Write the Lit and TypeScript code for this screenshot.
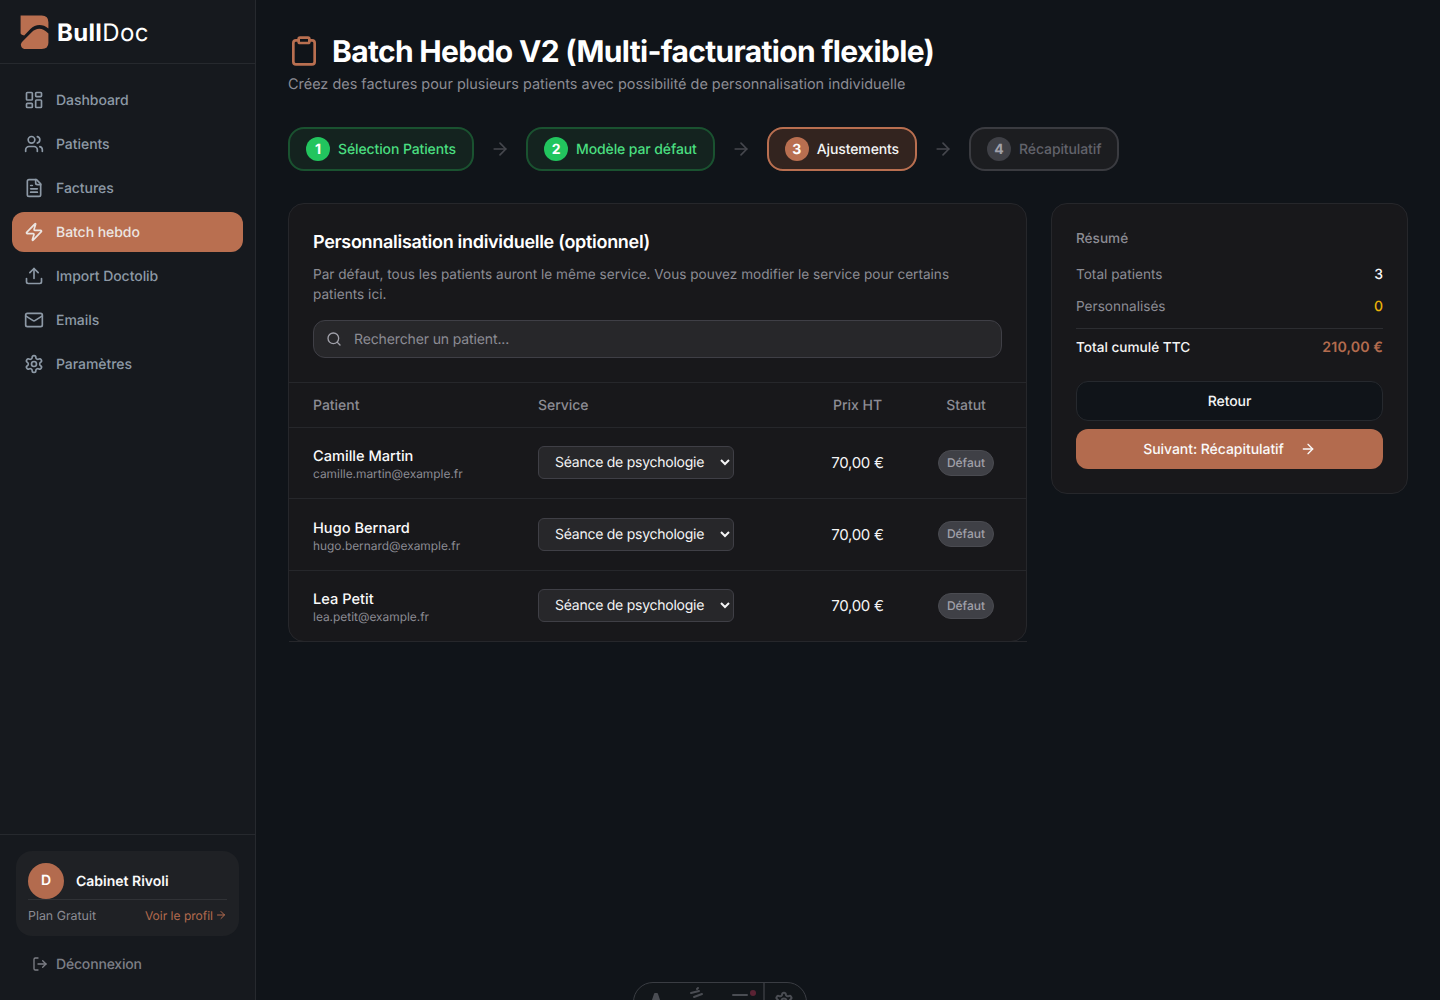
import { LitElement, html, css, svg } from "lit";
import { customElement } from "lit/decorators.js";

const ic = (body: unknown, size = 20, cls = "") => html`<svg class=${cls} width=${size} height=${size} viewBox="0 0 24 24" fill="none" stroke="currentColor" stroke-width="2" stroke-linecap="round" stroke-linejoin="round">${body}</svg>`;

const icons = {
  dash: svg`<rect x="3" y="3" width="7" height="9" rx="1"/><rect x="14" y="3" width="7" height="5" rx="1"/><rect x="14" y="12" width="7" height="9" rx="1"/><rect x="3" y="16" width="7" height="5" rx="1"/>`,
  users: svg`<path d="M16 21v-2a4 4 0 0 0-4-4H6a4 4 0 0 0-4 4v2"/><circle cx="9" cy="7" r="4"/><path d="M22 21v-2a4 4 0 0 0-3-3.87"/><path d="M16 3.13a4 4 0 0 1 0 7.75"/>`,
  file: svg`<path d="M15 2H6a2 2 0 0 0-2 2v16a2 2 0 0 0 2 2h12a2 2 0 0 0 2-2V7Z"/><path d="M14 2v4a2 2 0 0 0 2 2h4"/><path d="M10 9H8"/><path d="M16 13H8"/><path d="M16 17H8"/>`,
  zap: svg`<path d="M4 14a1 1 0 0 1-.78-1.63l9.9-10.2a.5.5 0 0 1 .86.46l-1.92 6.02A1 1 0 0 0 13 10h7a1 1 0 0 1 .78 1.63l-9.9 10.2a.5.5 0 0 1-.86-.46l1.92-6.02A1 1 0 0 0 11 14z"/>`,
  upload: svg`<path d="M21 15v4a2 2 0 0 1-2 2H5a2 2 0 0 1-2-2v-4"/><polyline points="17 8 12 3 7 8"/><line x1="12" y1="3" x2="12" y2="15"/>`,
  mail: svg`<rect x="2" y="4" width="20" height="16" rx="2"/><path d="m22 7-8.97 5.7a1.94 1.94 0 0 1-2.06 0L2 7"/>`,
  gear: svg`<path d="M12.22 2h-.44a2 2 0 0 0-2 2v.18a2 2 0 0 1-1 1.73l-.43.25a2 2 0 0 1-2 0l-.15-.08a2 2 0 0 0-2.73.73l-.22.38a2 2 0 0 0 .73 2.73l.15.1a2 2 0 0 1 1 1.72v.51a2 2 0 0 1-1 1.74l-.15.09a2 2 0 0 0-.73 2.73l.22.38a2 2 0 0 0 2.73.73l.15-.08a2 2 0 0 1 2 0l.43.25a2 2 0 0 1 1 1.73V20a2 2 0 0 0 2 2h.44a2 2 0 0 0 2-2v-.18a2 2 0 0 1 1-1.73l.43-.25a2 2 0 0 1 2 0l.15.08a2 2 0 0 0 2.73-.73l.22-.39a2 2 0 0 0-.73-2.73l-.15-.08a2 2 0 0 1-1-1.74v-.5a2 2 0 0 1 1-1.74l.15-.09a2 2 0 0 0 .73-2.73l-.22-.38a2 2 0 0 0-2.73-.73l-.15.08a2 2 0 0 1-2 0l-.43-.25a2 2 0 0 1-1-1.73V4a2 2 0 0 0-2-2z"/><circle cx="12" cy="12" r="3"/>`,
  logout: svg`<path d="M9 21H5a2 2 0 0 1-2-2V5a2 2 0 0 1 2-2h4"/><polyline points="16 17 21 12 16 7"/><line x1="21" y1="12" x2="9" y2="12"/>`,
  clip: svg`<rect x="8" y="2" width="8" height="4" rx="1"/><path d="M16 4h2a2 2 0 0 1 2 2v14a2 2 0 0 1-2 2H6a2 2 0 0 1-2-2V6a2 2 0 0 1 2-2h2"/>`,
  arrow: svg`<path d="M5 12h14"/><path d="m12 5 7 7-7 7"/>`,
  search: svg`<circle cx="11" cy="11" r="8"/><path d="m21 21-4.3-4.3"/>`,
};

const nav = [
  ["Dashboard", icons.dash], ["Patients", icons.users], ["Factures", icons.file], ["Batch hebdo", icons.zap],
  ["Import Doctolib", icons.upload], ["Emails", icons.mail], ["Paramètres", icons.gear],
] as const;

const steps = [
  { n: 1, t: "Sélection Patients", k: "done" },
  { n: 2, t: "Modèle par défaut", k: "done" },
  { n: 3, t: "Ajustements", k: "current" },
  { n: 4, t: "Récapitulatif", k: "todo" },
];

const patients = [
  ["Camille Martin", "camille.martin@example.fr"],
  ["Hugo Bernard", "hugo.bernard@example.fr"],
  ["Lea Petit", "lea.petit@example.fr"],
];

@customElement("app-root")
export class AppRoot extends LitElement {
  static styles = css`
    :host { display: block; height: 1000px; overflow: hidden; position: relative; font-family: Inter, "Liberation Sans", sans-serif; background: #101419; color: #fff; text-rendering: geometricPrecision; }
    * { box-sizing: border-box; }
    .shell { display: flex; height: 1000px; }
    .side { width: 256px; flex: none; display: flex; flex-direction: column; background: #16191e; border-right: 1px solid #26292e; }
    .brand { height: 64px; flex: none; display: flex; align-items: center; gap: 8px; padding-left: 20px; border-bottom: 1px solid #26292e; }
    .brand svg { display: block; margin-top: 1px; }
    .word { font-size: 24px; letter-spacing: 0.35px; font-weight: 700; color: #fff; line-height: 1; margin-top: 3px; }
    .word span { font-weight: 400; }
    nav { flex: 1; display: flex; flex-direction: column; gap: 4px; padding: 16px 12px; }
    .item { height: 40px; display: flex; align-items: center; gap: 12px; padding: 0 12px; border-radius: 12px; font-size: 14px; letter-spacing: -0.05px; font-weight: 500; color: #8d99a6; }
    .item.on { background: #b96f50; color: #ece6e2; }
    .foot { flex: none; height: 166px; border-top: 1px solid #26292e; padding: 16px; }
    .ucard { height: 85px; border-radius: 16px; background: #1f2125; padding: 12px 12px 0; }
    .urow { display: flex; align-items: center; gap: 12px; height: 37px; border-bottom: 1px solid #303236; padding-bottom: 1px; }
    .avatar { width: 36px; height: 36px; border-radius: 50%; background: #b36b4e; display: flex; align-items: center; justify-content: center; font-size: 14px; font-weight: 600; }
    .uname { font-size: 14px; font-weight: 600; color: #fafafa; margin-top: 2px; }
    .uplan { display: flex; justify-content: space-between; align-items: center; margin-top: 6px; font-size: 12px; color: #8b8b93; height: 18px; }
    .uplan span { font-size: 12.4px; }
    .uplan a { color: #b36b4e; display: flex; align-items: center; gap: 2px; }
    .logout { display: flex; align-items: center; gap: 8px; height: 40px; padding-left: 16px; margin-top: 8px; font-size: 14px; letter-spacing: -0.18px; font-weight: 500; color: #7d7f86; }

    main { flex: 1; min-width: 0; padding: 32px; }
    .head { display: flex; align-items: center; gap: 12px; height: 38px; }
    h1 { margin: 2px 0 0; font-size: 30px; line-height: 38px; font-weight: 700; letter-spacing: -0.67px; color: #fff; }
    .clip { color: #b96f50; }
    .sub { margin: 3px 0 0; font-size: 14.45px; line-height: 24px; color: #8c8c94; }
    .steps { display: flex; align-items: center; gap: 16px; margin-top: 30px; }
    .step { height: 44px; display: flex; align-items: center; gap: 8px; padding: 0 16px; border: 2px solid; border-radius: 16px; font-size: 14px; letter-spacing: -0.11px; font-weight: 500; }
    .step b { width: 24px; height: 24px; border-radius: 50%; display: flex; align-items: center; justify-content: center; font-size: 14px; font-weight: 700; }
    .done { background: #14231f; border-color: #1a5230; color: #4ade80; }
    .done b { background: #22c55e; color: #fff; }
    .current { background: #33241f; border-color: #b96f50; color: #f4f4f5; }
    .current b { background: #b96f50; color: #fff; }
    .todo { background: #1c1d20; border-color: #3a3b40; color: #62636b; }
    .todo b { background: #3f4046; color: #a1a1aa; }
    .sep { color: #45474d; display: flex; }
    .cols { display: grid; grid-template-columns: minmax(0, 1fr) 357px; gap: 24px; margin-top: 32px; align-items: start; }
    .card { background: #18181b; border: 1px solid #26272b; border-radius: 16px; }
    .top { padding: 24px; }
    h2 { margin: 1px 0 0; font-size: 18px; line-height: 28px; font-weight: 600; letter-spacing: -0.3px; color: #fff; }
    .desc { margin: 8px 0 0; font-size: 13.6px; line-height: 20px; color: #8c8c94; }
    .search { margin-top: 15px; height: 38px; display: flex; align-items: center; gap: 12px; padding: 0 12px; background: #27272a; border: 1px solid #3f3f46; border-radius: 12px; font-size: 14px; letter-spacing: -0.13px; color: #8c8c94; }
    .search svg { color: #a1a1aa; }
    table { border-collapse: collapse; table-layout: fixed; border-bottom: 1px solid #26272b; margin-bottom: -1px; width: calc(100% + 1px); }
    tr { border-top: 1px solid #26272b; }
    th { height: 44.6px; font-size: 14px; letter-spacing: -0.03px; font-weight: 500; color: #8c8c94; text-align: left; padding: 2px 0 0 24px; }
    td { height: 71.5px; padding: 0 0 0 24px; font-size: 14px; }
    td.who { padding-top: 3px; }
    .c { text-align: center; padding: 0; }
    th.c { padding-top: 2px; }
    .name { font-size: 14.6px; line-height: 20px; font-weight: 500; color: #fafafa; }
    .mail { font-size: 11.9px; line-height: 16px; color: #8c8c94; }
    select { width: 196px; height: 33px; font: 400 14px Inter, "Liberation Sans", sans-serif; letter-spacing: -0.25px; text-rendering: geometricPrecision; color: #f4f4f5; background: #27272a; border: 1px solid #3f3f46; border-radius: 6px; padding: 0 4px 0 12px; color-scheme: dark; display: block; }
    .price { font-size: 15px; letter-spacing: -0.3px; color: #f4f4f5; }
    .tag { display: inline-block; height: 26px; line-height: 24px; padding: 0 8px; border: 1px solid #4a4b51; border-radius: 13px; background: #3f4046; font-size: 12px; font-weight: 500; color: #a1a1aa; }
    .sum { padding: 24px; }
    .sumt { font-size: 13.6px; font-weight: 500; line-height: 20px; color: #8c8c94; margin-top: 1px; }
    .r { display: flex; justify-content: space-between; align-items: center; font-size: 13.6px; line-height: 20px; color: #8c8c94; margin-top: 12px; }
    .r.first { margin-top: 16px; }
    .r i { font-style: normal; font-weight: 500; font-size: 14px; color: #fafafa; }
    .r i.y { color: #eab308; }
    .tot { border-top: 1px solid #2c2d31; margin-top: 11px; padding-top: 9px; color: #f4f4f5; font-weight: 500; }
    .tot i { color: #b36b4e; font-weight: 600; font-size: 14.2px; letter-spacing: 0.1px; }
    .btn { height: 40px; display: flex; align-items: center; justify-content: center; gap: 16px; border-radius: 12px; font-size: 14px; letter-spacing: -0.05px; font-weight: 500; }
    .back { margin-top: 23px; background: #101419; border: 1px solid #26292e; color: #f4f4f5; }
    .next { margin-top: 8px; background: #b36b4e; color: #fafafa; }
    .dev { position: absolute; left: 633px; top: 982px; width: 174px; height: 40px; border: 1px solid #3a3d43; border-radius: 20px; background: #12161a; }
    .dev svg { position: absolute; left: 0; top: 0; }
  `;

  render() {
    return html`
      <div class="shell">
        <aside class="side">
          <div class="brand">
            <svg width="29" height="34" viewBox="20 15 28 33" fill="#b96f50">
              <path d="M20.5 15.5H41Q47.5 15.5 47.5 22V28C42 23.5 35 23.5 30 28.5L24 35Q21 34.5 20.5 33Z"/>
              <path d="M21 45C20 43 22 41 24 39L31 32C36 27 42 27 47.5 33V42Q47.5 48 41 48H26Q21.5 48 21 45Z"/>
            </svg>
            <div class="word">Bull<span>Doc</span></div>
          </div>
          <nav>
            ${nav.map(([t, i]) => html`<div class="item ${t === "Batch hebdo" ? "on" : ""}">${ic(i)}<span>${t}</span></div>`)}
          </nav>
          <div class="foot">
            <div class="ucard">
              <div class="urow"><div class="avatar">D</div><div class="uname">Cabinet Rivoli</div></div>
              <div class="uplan"><span>Plan Gratuit</span><a>Voir le profil ${ic(icons.arrow, 12)}</a></div>
            </div>
            <div class="logout">${ic(icons.logout, 16)}<span>Déconnexion</span></div>
          </div>
        </aside>
        <main>
          <div class="head">${ic(icons.clip, 32, "clip")}<h1>Batch Hebdo V2 (Multi-facturation flexible)</h1></div>
          <p class="sub">Créez des factures pour plusieurs patients avec possibilité de personnalisation individuelle</p>
          <div class="steps">
            ${steps.map((s, i) => html`
              <div class="step ${s.k}"><b>${s.n}</b><span>${s.t}</span></div>
              ${i < 3 ? html`<span class="sep">${ic(icons.arrow)}</span>` : ""}
            `)}
          </div>
          <div class="cols">
            <section class="card">
              <div class="top">
                <h2>Personnalisation individuelle (optionnel)</h2>
                <p class="desc">Par défaut, tous les patients auront le même service. Vous pouvez modifier le service pour certains patients ici.</p>
                <div class="search">${ic(icons.search, 16)}<span>Rechercher un patient...</span></div>
              </div>
              <table>
                <colgroup><col style="width:225px"/><col style="width:296px"/><col style="width:95px"/><col style="width:122px"/></colgroup>
                <thead><tr><th>Patient</th><th>Service</th><th class="c">Prix HT</th><th class="c">Statut</th></tr></thead>
                <tbody>
                  ${patients.map(([n, m]) => html`<tr>
                    <td class="who"><div class="name">${n}</div><div class="mail">${m}</div></td>
                    <td><select><option>Séance de psychologie</option></select></td>
                    <td class="c"><span class="price">70,00 €</span></td>
                    <td class="c"><span class="tag">Défaut</span></td>
                  </tr>`)}
                </tbody>
              </table>
            </section>
            <aside class="card sum">
              <div class="sumt">Résumé</div>
              <div class="r first"><span>Total patients</span><i>3</i></div>
              <div class="r"><span>Personnalisés</span><i class="y">0</i></div>
              <div class="r tot"><span>Total cumulé TTC</span><i>210,00 €</i></div>
              <div class="btn back">Retour</div>
              <div class="btn next"><span>Suivant: Récapitulatif</span>${ic(icons.arrow, 16)}</div>
            </aside>
          </div>
        </main>
      </div>
      <div class="dev">
        <svg width="174" height="18" viewBox="0 0 174 18" fill="none" stroke="#4a4d53" stroke-width="2" stroke-linecap="round" stroke-linejoin="round">
          <path d="M19 17l2-6h2l2 6" fill="#4a4d53"/>
          <path d="M57 10l8-2M60 14l8-3M63 6l1-1"/>
          <path d="M99 12h14"/>
          <circle cx="119" cy="10" r="3" fill="#5a2233" stroke="none"/>
          <path d="M130 0v18" stroke-width="1"/>
          <g transform="translate(140 8) scale(.83)" stroke-width="2.4">${icons.gear}</g>
        </svg>
      </div>
    `;
  }
}
